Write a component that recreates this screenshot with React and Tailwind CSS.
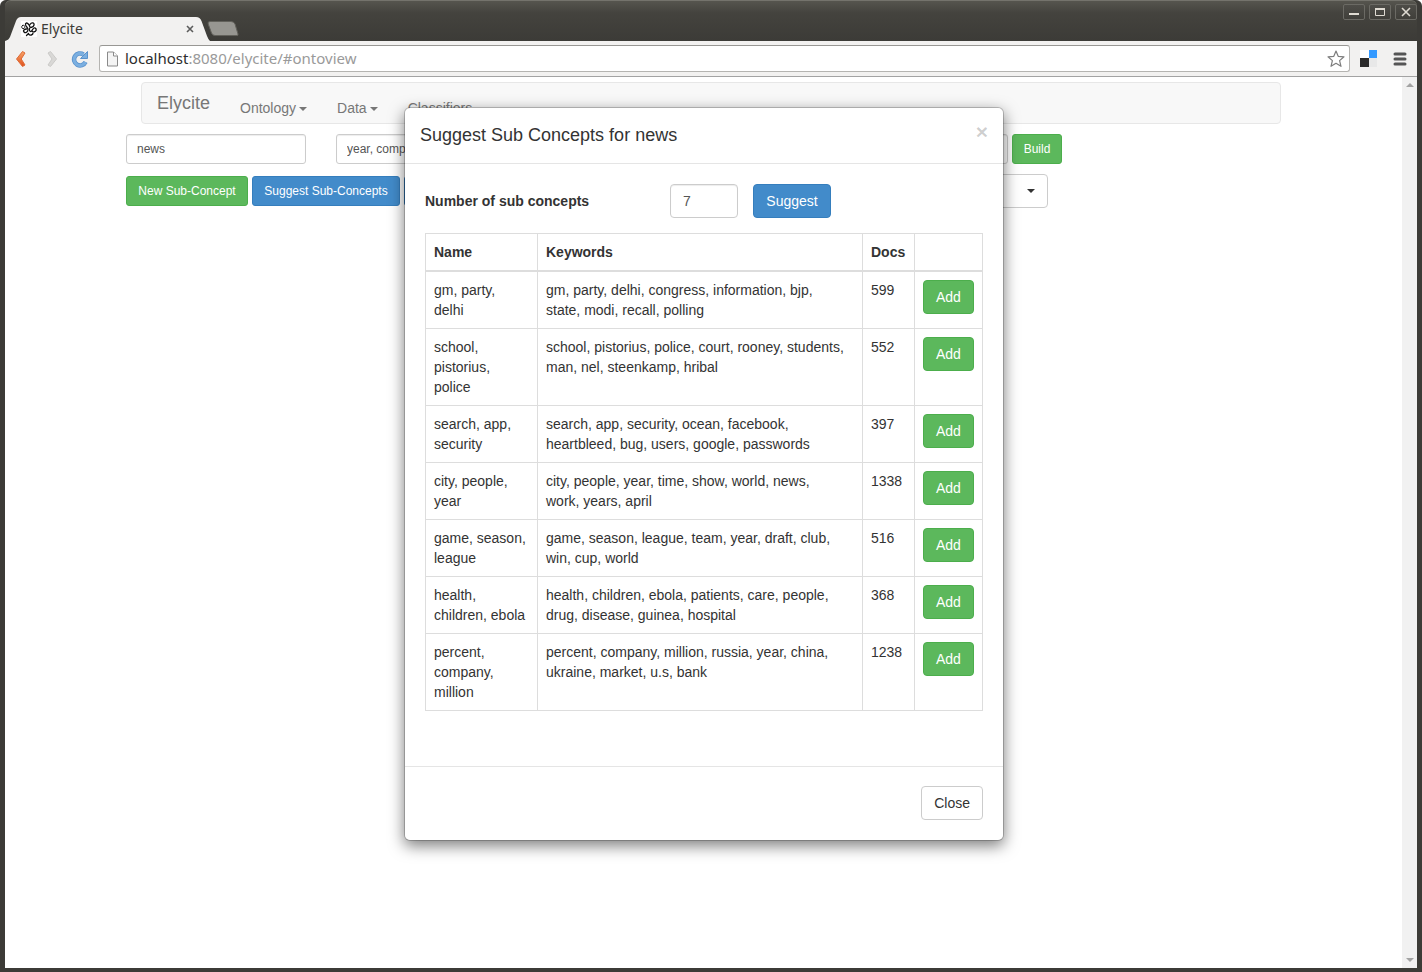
import React from "react";

const rows = [
  ["gm, party, delhi", "gm, party, delhi, congress, information, bjp, state, modi, recall, polling", 599],
  ["school, pistorius, police", "school, pistorius, police, court, rooney, students, man, nel, steenkamp, hribal", 552],
  ["search, app, security", "search, app, security, ocean, facebook, heartbleed, bug, users, google, passwords", 397],
  ["city, people, year", "city, people, year, time, show, world, news, work, years, april", 1338],
  ["game, season, league", "game, season, league, team, year, draft, club, win, cup, world", 516],
  ["health, children, ebola", "health, children, ebola, patients, care, people, drug, disease, guinea, hospital", 368],
  ["percent, company, million", "percent, company, million, russia, year, china, ukraine, market, u.s, bank", 1238],
];

const green = "border border-[#4cae4c] bg-[#5cb85c] text-white";
const blue = "border border-[#357ebd] bg-[#428bca] text-white";
const small = "h-[30px] rounded-[3px] px-2.5 text-xs";
const regular = "h-[34px] rounded px-3 text-sm";
const field = "border border-[#ccc] bg-white text-[#555] shadow-[inset_0_1px_1px_rgba(0,0,0,0.075)] outline-none";

function Caret({ className = "" }) {
  return (
    <svg className={className} width="8" height="4" viewBox="0 0 8 4" aria-hidden="true">
      <path d="M0 0h8L4 4z" fill="currentColor" />
    </svg>
  );
}

function WindowButton({ label, children }) {
  return (
    <button
      aria-label={label}
      className="flex h-4 w-[22px] items-center justify-center rounded-[2px] border border-[#6b6a64] bg-linear-to-b from-[#4e4d48] to-[#403f3a]"
    >
      <svg width="12" height="12" viewBox="0 0 12 12" fill="none" stroke="#dfdbd2" aria-hidden="true">
        {children}
      </svg>
    </button>
  );
}

function TitleBar() {
  return (
    <header className="flex h-[41px] shrink-0 items-end justify-between rounded-t-md border-t border-[#74736c] bg-linear-to-b from-[#56554e] via-[#44433e] via-30% to-[#3c3b37]">
      <div className="flex items-end">
        <div className="relative flex h-6 w-[205px] items-center pr-3 pl-4">
          <svg className="absolute inset-0" width="205" height="24" viewBox="0 0 205 24" aria-hidden="true">
            <path d="M0 24C3 23 4 22 5 20L11 4Q12.500 0 16 0H191Q195 0 196.500 4L202 19Q203.500 23 205 24Z" fill="#f2f1f0" />
          </svg>
          <div className="relative flex w-full items-center gap-1">
            <svg width="16" height="16" viewBox="0 0 16 16" aria-hidden="true">
              <path d="M0 0h16v16H0z" fill="#fff" />
              <g fill="none" stroke="#111" strokeWidth="1.300" strokeLinecap="round">
                <path d="M9 6C8 2.500 5 .8 4.500 3s2.500 3 2.500 5.500-2.500 4-4 2.500 .5-3 2.500-3" />
                <path d="M1.500 4.500C3 3.500 4.200 5 3.700 6.500S1 8 .8 6.500 1 5 1.500 4.500z" strokeWidth="1" />
                <path d="M9 3.500c1.500-2.500 4.500-2 4 .5S11 6 9.500 6.500 8 10 9.500 10.500 11.500 7.500 13 7s2.500 1 2 2.500-2.500 1.500-3.500 1" />
                <path d="M7.500 13c1.500 2 4.500 1 4.500-1M5.500 14.500l2-2" />
              </g>
            </svg>
            <span className="text-sm text-[#3c3b37]">Elycite</span>
            <button aria-label="Close tab" className="ml-auto flex size-4 items-center justify-center">
              <svg width="8" height="8" viewBox="0 0 8 8" stroke="#5c5c5c" strokeWidth="1.600" aria-hidden="true">
                <path d="M1 1l6 6M7 1L1 7" />
              </svg>
            </button>
          </div>
        </div>
        <button aria-label="New tab" className="mb-1 -ml-[3px]">
          <svg className="block" width="32" height="16" viewBox="0 0 32 16" aria-hidden="true">
            <path d="M3 .5H24Q27 .5 28 3L31 13Q31.500 14.500 30 14.500H8Q5.500 14.500 4.500 12L1.200 3Q.5 .5 3 .5Z" fill="#979691" stroke="#62615b" />
          </svg>
        </button>
      </div>
      <div className="flex gap-1 self-start pt-[3px]">
        <WindowButton label="Minimize"><path d="M1 8h10" strokeWidth="2" /></WindowButton>
        <WindowButton label="Maximize"><path d="M1.500 3h9v6.500h-9z" /><path d="M1 3h10" strokeWidth="2" /></WindowButton>
        <WindowButton label="Close window"><path d="M2 2l8 8M10 2l-8 8" strokeWidth="1.600" /></WindowButton>
      </div>
    </header>
  );
}

function Toolbar() {
  return (
    <div className="flex h-9 shrink-0 items-center border-b border-[#a3a3a3] bg-[#f2f1f0] pr-2 pl-2">
      <button aria-label="Back" className="flex w-[30px] items-center pl-0.5">
        <svg width="12" height="18" viewBox="0 0 12 18" aria-hidden="true">
          <defs>
            <linearGradient id="back" x1="0" y1="0" x2="0" y2="1">
              <stop offset="0" stopColor="#f7a468" />
              <stop offset="1" stopColor="#e0501c" />
            </linearGradient>
          </defs>
          <path d="M7.500 1.500L10 3 6.200 9l3.800 6-2.500 1.500L1.500 9z" fill="url(#back)" stroke="#de6a36" strokeWidth="1" strokeLinejoin="round" />
        </svg>
      </button>
      <button aria-label="Forward" className="flex w-7 items-center pl-1">
        <svg width="12" height="18" viewBox="0 0 12 18" aria-hidden="true">
          <path d="M3.500 1.500L1 3l4 6-4 6 2.500 1.500L9.500 9z" fill="#d9d8d6" stroke="#cbcac8" strokeWidth="1" strokeLinejoin="round" />
        </svg>
      </button>
      <button aria-label="Reload" className="mr-2.5">
        <svg width="18" height="18" viewBox="0 0 18 18" aria-hidden="true">
          <path d="M14.500 12A6 6 0 1 1 12.500 4.500" fill="none" stroke="#5a92cc" strokeWidth="4.500" />
          <path d="M14.500 12A6 6 0 1 1 12.500 4.500" fill="none" stroke="#7bafe0" strokeWidth="3" />
          <path d="M16.500 1.500v7h-7z" fill="#7bafe0" stroke="#5a92cc" strokeLinejoin="round" />
        </svg>
      </button>
      <div className="flex h-[27px] flex-1 items-center rounded-[3px] border border-[#b5b4b1] border-t-[#989794] bg-white pr-1 pl-1.5">
        <svg className="mr-1.5 shrink-0" width="13" height="16" viewBox="0 0 13 16" aria-hidden="true">
          <path d="M1.500 1h6L11.500 5v10h-10z" fill="#f4f4f4" stroke="#8a8a8a" strokeLinejoin="round" />
          <path d="M7.500 1v4h4" fill="#fff" stroke="#8a8a8a" strokeLinejoin="round" />
        </svg>
        <div className="flex-1 pb-0.5 text-[15px] leading-5 text-[#9a9a9a]">
          <span className="text-[#2d2d2d]">localhost</span>:8080/elycite/#ontoview
        </div>
        <button aria-label="Bookmark this page">
          <svg width="18" height="18" viewBox="0 0 18 18" aria-hidden="true">
            <path d="M9 1l2.200 5.300 5.800.5-4.400 3.800 1.400 5.700L9 13.300l-5 3 1.400-5.700L1 6.800l5.800-.5z" fill="#fff" stroke="#7d7d7d" strokeWidth="1.200" strokeLinejoin="round" />
          </svg>
        </button>
      </div>
      <button aria-label="Bookmarks extension" className="mr-[15px] ml-2.5">
        <svg className="block" width="18" height="18" viewBox="0 0 18 18" aria-hidden="true">
          <path d="M0 0h9v8H0z" fill="#fff" />
          <path d="M9 0h8v8H9z" fill="#3399ff" />
          <path d="M0 8h9v9H0z" fill="#2b2b2b" />
          <path d="M9 8h8v9H9z" fill="#e8e8e8" />
        </svg>
      </button>
      <button aria-label="Menu" className="mr-0.5">
        <svg className="block" width="14" height="14" viewBox="0 0 14 14" stroke="#555" strokeWidth="3" strokeLinecap="round" aria-hidden="true">
          <path d="M2 2h10M2 7h10M2 12h10" />
        </svg>
      </button>
    </div>
  );
}

function Page() {
  return (
    <main className="mx-auto w-full max-w-[1170px] pt-[5px]">
      <nav className="mx-[15px] flex h-[42px] rounded border border-[#e7e7e7] bg-[#f8f8f8] text-sm text-[#777]">
        <a href="#home" className="px-[15px] pt-2.5 text-lg leading-5">Elycite</a>
        <a href="#ontology" className="flex items-start px-[15px] pt-[15px] leading-5">
          Ontology<Caret className="mt-[9px] ml-[3px]" />
        </a>
        <a href="#data" className="flex items-start px-[15px] pt-[15px] leading-5">
          Data<Caret className="mt-[9px] ml-[3px]" />
        </a>
        <a href="#classifiers" className="px-[15px] pt-[15px] leading-5">Classifiers</a>
      </nav>
      <div className="mt-2.5 flex">
        <input aria-label="Concept name" defaultValue="news" className={`mr-[30px] w-[180px] ${small} ${field}`} />
        <input aria-label="Keywords" defaultValue="year, company, people" className={`mr-1 w-[672px] ${small} ${field}`} />
        <button className={`w-[50px] ${small} ${green}`}>Build</button>
      </div>
      <div className="mt-2.5 flex w-[922px] items-center gap-1">
        <button className={`w-[122px] ${small} ${green}`}>New Sub-Concept</button>
        <button className={`w-[148px] ${small} ${blue}`}>Suggest Sub-Concepts</button>
        <button aria-label="Delete concept" className={`${small} ${blue}`} />
        <div className="relative ml-auto">
          <select aria-label="Classifier" className="h-[34px] w-[200px] appearance-none rounded border border-[#ccc] bg-white px-3 text-sm">
            <option></option>
          </select>
          <Caret className="pointer-events-none absolute top-[15px] right-[13px] text-[#333]" />
        </div>
      </div>
    </main>
  );
}

function SuggestDialog() {
  return (
    <section
      role="dialog"
      aria-labelledby="dialog-title"
      className="w-[600px] rounded-md border border-black/20 bg-white bg-clip-padding shadow-[0_5px_15px_rgba(0,0,0,0.5)]"
    >
      <div className="flex justify-between border-b border-[#e5e5e5] p-[15px]">
        <h4 id="dialog-title" className="text-lg leading-[25px]">Suggest Sub Concepts for news</h4>
        <button aria-label="Close dialog" className="h-[18px] text-[21px] leading-[18px] font-bold text-black/20">×</button>
      </div>
      <div className="p-5">
        <form className="mb-[15px] flex items-center" onSubmit={(e) => e.preventDefault()}>
          <label htmlFor="count" className="w-[245px] font-bold">Number of sub concepts</label>
          <input id="count" defaultValue="7" className={`mr-[15px] w-[68px] ${regular} ${field}`} />
          <button className={`w-[78px] ${regular} ${blue}`}>Suggest</button>
        </form>
        <table className="mb-[35px] w-full table-fixed border-collapse [&_td]:border [&_td]:border-[#ddd] [&_td]:py-2 [&_td]:pl-2 [&_td]:align-top [&_th]:border [&_th]:border-b-2 [&_th]:border-[#ddd] [&_th]:py-2 [&_th]:pl-2 [&_th]:text-left">
          <colgroup>
            <col className="w-[112px]" />
            <col />
            <col className="w-[52px]" />
            <col className="w-[68px]" />
          </colgroup>
          <thead>
            <tr>
              <th>Name</th>
              <th>Keywords</th>
              <th>Docs</th>
              <th></th>
            </tr>
          </thead>
          <tbody>
            {rows.map(([name, keywords, docs]) => (
              <tr key={name}>
                <td className="pr-2.5">{name}</td>
                <td className="pr-4">{keywords}</td>
                <td>{docs}</td>
                <td>
                  <button className={`block ${regular} ${green}`}>Add</button>
                </td>
              </tr>
            ))}
          </tbody>
        </table>
      </div>
      <div className="flex justify-end border-t border-[#e5e5e5] px-5 pt-[19px] pb-5">
        <button className={`${regular} border border-[#ccc] bg-white`}>Close</button>
      </div>
    </section>
  );
}

export default function App() {
  return (
    <div className="flex min-h-screen flex-col rounded-t-md border-r-[5px] border-b-4 border-l-[5px] border-[#3c3b37] bg-[#3c3b37] font-['Noto_Sans',sans-serif]">
      <TitleBar />
      <Toolbar />
      <div className="relative flex-1 bg-white font-['Liberation_Sans',Arial,sans-serif] text-sm leading-5 text-[#333]">
        <Page />
        <div className="absolute inset-0 flex">
          <div className="flex flex-1 items-start justify-center pt-[30px] pl-px">
            <SuggestDialog />
          </div>
          <div className="flex w-[15px] flex-col items-center justify-between bg-[#f1f1f1] py-1.5 text-[#a3a3a3]">
            <Caret className="rotate-180" />
            <Caret />
          </div>
        </div>
      </div>
    </div>
  );
}
